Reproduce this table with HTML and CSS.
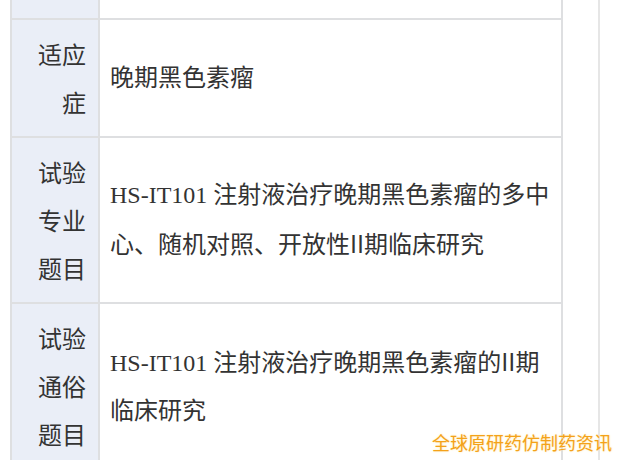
FILE: index.html
```html
<!DOCTYPE html>
<html lang="zh-CN">
<head>
    <meta charset="UTF-8">
    <meta name="viewport" content="width=device-width, initial-scale=1.0">
    <title>试验信息</title>
    <link rel="stylesheet" href="styles.css">
</head>
<body>

<div class="page">
    <div class="info-table">
        <div class="label cut"></div>
        <div class="value cut"></div>

        <div class="label">适应症</div>
        <div class="value"><p>晚期黑色素瘤</p></div>

        <div class="label">试验专业题目</div>
        <div class="value"><p>HS-IT101 注射液治疗晚期黑色素瘤的多中心、随机对照、开放性<span class="roman">II</span>期临床研究</p></div>

        <div class="label">试验通俗题目</div>
        <div class="value"><p>HS-IT101 注射液治疗晚期黑色素瘤的<span class="roman">II</span>期临床研究</p></div>
    </div>
</div>

<div class="watermark">全球原研药仿制药资讯</div>

</body>
</html>
```

FILE: styles.css
```css
body {
    margin: 0;
    background-color: #fff;
    font-family: "Liberation Serif", "Noto Sans CJK SC", serif;
    color: #333;
    overflow: hidden;
}
.page {
    width: 598px;
    height: 460px;
    border-right: 2px solid #e6e6e6;
}
.info-table {
    display: grid;
    grid-template-columns: 86px 1fr;
    gap: 2px;
    box-sizing: border-box;
    width: 553px;
    margin-left: 10px;
    background-color: #dedfe1;
    border: 2px solid #dedfe1;
    border-top: none;
}
.label {
    background-color: #eaeef7;
    padding: 10px 12px 10px 8px;
    text-align: right;
    font-family: "Noto Sans CJK SC", sans-serif;
    font-size: 24px;
    line-height: 48px;
}
.value {
    background-color: #fff;
    padding: 10px 10px;
    font-size: 24px;
    line-height: 48px;
    display: flex;
    align-items: center;
}
.value p {
    margin: 0;
}
.value.cut, .label.cut {
    height: 18px;
    padding: 0;
}
.roman {
    font-family: "Noto Sans CJK SC", sans-serif;
}
.watermark {
    position: absolute;
    right: 14px;
    bottom: 6px;
    font-family: "Noto Sans CJK SC", sans-serif;
    font-size: 18px;
    line-height: 24px;
    color: #f4a21a;
    text-shadow: 0 0 2px #ffe7a0;
}
```
